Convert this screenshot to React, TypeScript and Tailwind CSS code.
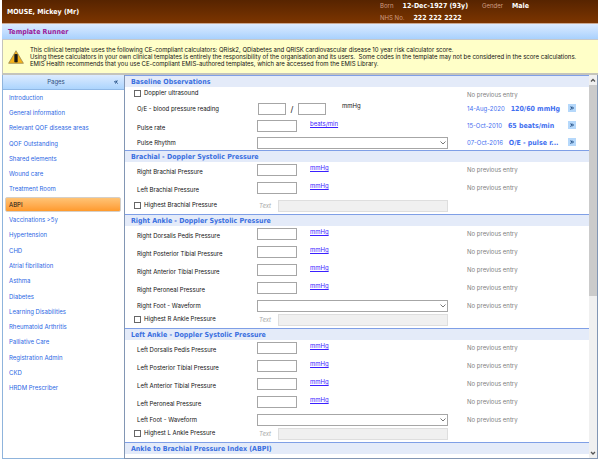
import type { ReactNode } from "react";

const pages = [
  "Introduction",
  "General information",
  "Relevant QOF disease areas",
  "QOF Outstanding",
  "Shared elements",
  "Wound care",
  "Treatment Room",
  "ABPI",
  "Vaccinations >5y",
  "Hypertension",
  "CHD",
  "Atrial fibrillation",
  "Asthma",
  "Diabetes",
  "Learning Disabilities",
  "Rheumatoid Arthritis",
  "Palliative Care",
  "Registration Admin",
  "CKD",
  "HRDM Prescriber",
];

const box = "h-3 border border-[#a6a6a6] bg-white outline-none";
const rowGrid = "grid grid-cols-[132px_minmax(0,1fr)_141px] items-start";
const strong = "font-['DejaVu_Sans_Condensed','DejaVu_Sans',sans-serif] text-[7px] font-bold";

function Section({ title, children }: { title: string; children: ReactNode }) {
  return (
    <section>
      <h2 className={`${strong} h-3 border-t border-[#7f9fe6] bg-[#e4ebf9] pl-[6px] leading-[12px] text-[#3a6fe0]`}>
        {title}
      </h2>
      {children}
    </section>
  );
}

function NoEntry() {
  return <span className="pt-[3px] pl-[19px] text-[#808080]">No previous entry</span>;
}

function Previous({ date, value }: { date: string; value: string }) {
  return (
    <div className="flex items-start pt-[3px] pr-[13px] pl-[19px] text-[#3f6ff0]">
      <a href="#history" className="flex flex-1 gap-[6px] whitespace-nowrap">
        <span>{date}</span>
        <b className={strong}>{value}</b>
      </a>
      <button aria-label={`Show history from ${date}`} className="flex size-2 items-center justify-center bg-[#b5d8fb]">
        <DoubleChevron className="size-1 text-[#123f78]" />
      </button>
    </div>
  );
}

function DoubleChevron({ className }: { className: string }) {
  return (
    <svg viewBox="0 0 6 6" className={className} fill="none" stroke="currentColor" strokeWidth="1.5" aria-hidden="true">
      <path d="M0.5 0.8 2.7 3 0.5 5.2M3 0.8 5.2 3 3 5.2" />
    </svg>
  );
}

function PressureRow({ id, label, height = "h-[18px]", unit = "mmHg", children }: {
  id: string;
  label: string;
  height?: string;
  unit?: string;
  children?: ReactNode;
}) {
  return (
    <div className={`${rowGrid} ${height}`}>
      <label htmlFor={id} className="pt-[5px] pl-[12px]">{label}</label>
      <div className="flex items-start gap-[13px]">
        <input id={id} className={`${box} mt-[2px] w-10`} />
        <a href="#unit" className="pt-px text-[#3a20ff] underline">{unit}</a>
      </div>
      {children ?? <NoEntry />}
    </div>
  );
}

function SelectRow({ id, label, height, children }: { id: string; label: string; height: string; children?: ReactNode }) {
  return (
    <div className={`${rowGrid} ${height}`}>
      <label htmlFor={id} className="pt-[3px] pl-[12px]">{label}</label>
      <div className="relative pt-[2px]">
        <select id={id} className={`${box} block w-full appearance-none`} />
        <svg viewBox="0 0 6 4" className="pointer-events-none absolute top-[6px] right-[2px] h-1 w-[6px]" fill="none" stroke="#777" aria-hidden="true">
          <path d="M0.5 0.5 3 3 5.5 0.5" />
        </svg>
      </div>
      {children ?? <NoEntry />}
    </div>
  );
}

function Tick({ label }: { label: string }) {
  return (
    <label className="flex items-center gap-[3px] pl-[9px]">
      <input type="checkbox" className="size-[7px] appearance-none border border-[#666] bg-white checked:bg-[#3a6fe0]" />
      {label}
    </label>
  );
}

function TickTextRow({ id, label, height }: { id: string; label: string; height: string }) {
  return (
    <div className={`${rowGrid} ${height}`}>
      <Tick label={label} />
      <div className="flex items-center gap-[7px]">
        <label htmlFor={id} className="pl-[2px] text-[#a8a8a8] italic">Text</label>
        <input id={id} disabled className="h-3 min-w-0 flex-1 border border-[#dedede] bg-[#f0f0f0]" />
      </div>
    </div>
  );
}

function Ankle({ side, letter }: { side: string; letter: string }) {
  return (
    <Section title={`${side} Ankle - Doppler Systolic Pressure`}>
      {["Dorsalis Pedis", "Posterior Tibial", "Anterior Tibial", "Peroneal"].map((site) => (
        <PressureRow key={site} id={`${side}-${site}`} label={`${side} ${site} Pressure`} />
      ))}
      <SelectRow id={`${side}-waveform`} label={`${side} Foot - Waveform`} height="h-4" />
      <TickTextRow id={`${side}-highest`} label={`Highest ${letter} Ankle Pressure`} height="h-[14px]" />
    </Section>
  );
}

export default function App() {
  return (
    <div className="flex h-screen flex-col overflow-hidden bg-white pr-[2px] pl-[2px] font-[Inter,'Noto_Sans',sans-serif] text-[6px] leading-[10px] text-[#111]">
      <header className="flex h-6 shrink-0 items-center justify-between border-b border-[#c9a994] bg-linear-to-b from-[#572400] to-[#7c3500] pr-[69px] pl-[5px] text-white">
        <h1 className={strong}>MOUSE, Mickey (Mr)</h1>
        <dl className="grid grid-cols-[auto_auto] gap-x-[14px] gap-y-[2px]">
          <div className="flex gap-[9px]">
            <dt className="text-[#cf9d80]">Born</dt>
            <dd className={strong}>12-Dec-1927 (93y)</dd>
          </div>
          <div className="flex gap-[9px]">
            <dt className="text-[#cf9d80]">Gender</dt>
            <dd className={strong}>Male</dd>
          </div>
          <div className="flex gap-[9px]">
            <dt className="text-[#cf9d80]">NHS No.</dt>
            <dd className={strong}>222 222 2222</dd>
          </div>
        </dl>
      </header>
      <div className={`${strong} h-4 shrink-0 border-b border-[#c8c8c8] bg-linear-to-b from-[#dcebff] to-[#a9d1fd] pl-[6px] leading-4 text-[#9a1a9a]`}>
        Template Runner
      </div>
      <div className="flex h-[35px] shrink-0 items-center gap-[6px] border-b-2 border-l border-[#c4c4bc] bg-[#ffffc8] pl-[5px]">
        <svg viewBox="0 0 16 14" className="h-[14px] w-4 shrink-0" aria-hidden="true">
          <path d="M8 0.7 15.4 13.3H0.6Z" fill="#f5b21a" stroke="#9a8850" strokeWidth="0.8" strokeLinejoin="round" />
          <path d="M6.2 4.200h3.600v8H6.200z" fill="#3a3320" />
          <path d="M7.300 4h1.500v8.200H7.300z" fill="#111" />
        </svg>
        <p className="whitespace-pre leading-[7px]">
          {"This clinical template uses the following CE-compliant calculators: QRisk2, QDiabetes and QRISK cardiovascular disease 10 year risk calculator score.\nUsing these calculators in your own clinical templates is entirely the responsibility of the organisation and its users.  Some codes in the template may not be considered in the score calculations.\nEMIS Health recommends that you use CE-compliant EMIS-authored templates, which are accessed from the EMIS Library."}
        </p>
      </div>
      <div className="flex min-h-0 flex-1">
        <nav aria-label="Pages" className="w-[122px] shrink-0 border-b border-l border-[#8fb4dc]">
          <div className="flex h-[15px] items-center border-b border-[#8fb8e6] bg-linear-to-b from-[#dcebff] to-[#acd4fd] pr-[6px] pl-px">
            <h2 className="flex-1 pr-[6px] text-center text-[#2d4f7c]">Pages</h2>
            <button aria-label="Collapse pages">
              <DoubleChevron className="size-1 rotate-180 text-[#123f78]" />
            </button>
          </div>
          <ul className="grid h-[306px] auto-rows-fr pr-[3px] pl-[2px]">
            {pages.map((page) => (
              <li key={page} className="flex">
                <a
                  href="#page"
                  className={
                    page === "ABPI"
                      ? "flex flex-1 items-center rounded-xs border border-[#d5cfc8] bg-linear-to-b from-[#ffc374] to-[#ff9a2a] pl-[3px]"
                      : "flex flex-1 items-center pl-[4px] text-[#2a66e4]"
                  }
                >
                  {page}
                </a>
              </li>
            ))}
          </ul>
        </nav>
        <main className="flex min-w-0 flex-1 border-r border-b border-l border-[#8296b4]">
          <form className="min-w-0 flex-1 overflow-hidden">
            <Section title="Baseline Observations">
              <div className={`${rowGrid} h-[14px]`}>
                <div className="pt-px"><Tick label="Doppler ultrasound" /></div>
                <span />
                <NoEntry />
              </div>
              <div className={`${rowGrid} h-[17px]`}>
                <label htmlFor="systolic" className="pt-[3px] pl-[12px]">O/E - blood pressure reading</label>
                <div className="flex items-start pl-px">
                  <input id="systolic" className={`${box} mt-[2px] w-7`} />
                  <span className="w-3 pt-[3px] text-center text-[8px]">/</span>
                  <input aria-label="Diastolic" className={`${box} mt-[2px] w-7`} />
                  <span className="pl-4">mmHg</span>
                </div>
                <Previous date="14-Aug-2020" value="120/60 mmHg" />
              </div>
              <PressureRow id="pulse-rate" label="Pulse rate" unit="beats/min" height="h-[17px]">
                <Previous date="15-Oct-2010" value="65 beats/min" />
              </PressureRow>
              <SelectRow id="pulse-rhythm" label="Pulse Rhythm" height="h-[15px]">
                <Previous date="07-Oct-2016" value="O/E - pulse r..." />
              </SelectRow>
            </Section>
            <Section title="Brachial - Doppler Systolic Pressure">
              <PressureRow id="right-brachial" label="Right Brachial Pressure" />
              <PressureRow id="left-brachial" label="Left Brachial Pressure" />
              <TickTextRow id="highest-brachial" label="Highest Brachial Pressure" height="h-4 pt-[2px]" />
            </Section>
            <Ankle side="Right" letter="R" />
            <Ankle side="Left" letter="L" />
            <Section title="Ankle to Brachial Pressure Index (ABPI)">{null}</Section>
          </form>
          <div className="flex w-2 shrink-0 flex-col bg-[#f0f0f0] text-[#555]" aria-hidden="true">
            <svg viewBox="0 0 8 10" className="h-[10px]" fill="none" stroke="currentColor" strokeWidth="1.3">
              <path d="M2 6.500 4 4.500 6 6.500" />
            </svg>
            <div className="h-[211px] bg-[#cbcbcb]" />
            <div className="flex-1" />
            <svg viewBox="0 0 8 10" className="h-[10px]" fill="none" stroke="currentColor" strokeWidth="1.3">
              <path d="M2 4 4 6 6 4" />
            </svg>
          </div>
        </main>
      </div>
    </div>
  );
}
